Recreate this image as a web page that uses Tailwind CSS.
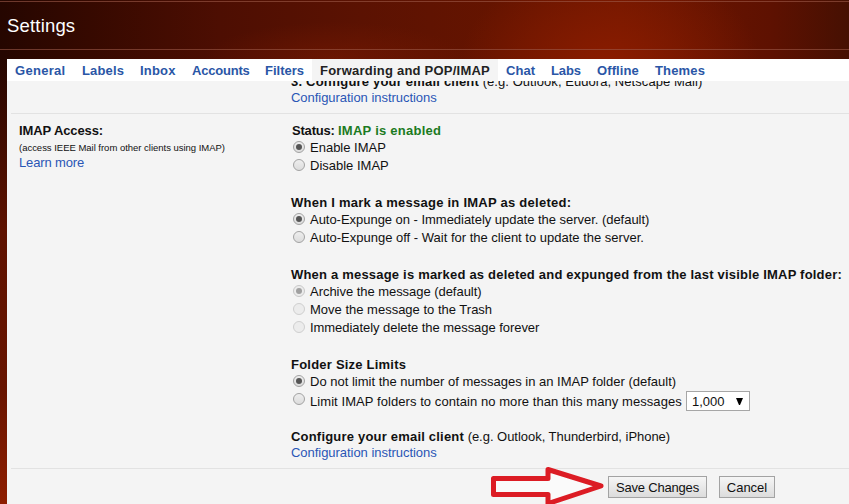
<!DOCTYPE html>
<html lang="en">
<head>
<meta charset="utf-8">
<title>Settings</title>
<script src="https://cdn.jsdelivr.net/npm/@tailwindcss/browser@4"></script>
</head>
<body class="w-[849px] h-[504px] overflow-hidden font-['Liberation_Sans',Arial,sans-serif] text-[13px] leading-4 text-[#111] bg-[#641302]">
<div class="w-full h-full flex flex-col bg-[radial-gradient(ellipse_130px_36px_at_335px_58px,#841d0166,transparent),radial-gradient(ellipse_150px_100px_at_610px_64px,#8a1c00,#8a1c0000),linear-gradient(to_bottom,transparent_60px,#5e1200_230px,#681400_390px,#8e1d00_504px),linear-gradient(to_right,#250600,#360900_90px,#4d0e02_220px,#5b1202_360px,#651400_500px,#701700_620px,#5e1101_770px,#461002)]">
  <header class="mt-px h-[49px] shrink-0 border-y border-[#9c5a4a99] flex items-center pl-[7px]">
    <h1 class="text-[18.5px] leading-6 text-white tracking-[0.18px]">Settings</h1>
  </header>
  <main class="mt-[9px] ml-[7px] flex-1 flex flex-col bg-[#f4f4f4]">
    <nav class="h-[22px] shrink-0 flex bg-white font-bold text-[#2a56a6] leading-[23px] whitespace-nowrap relative">
      <a class="w-[67px] pl-2 tracking-[0.3px]">General</a>
      <a class="w-[58px] pl-2 tracking-[0.15px]">Labels</a>
      <a class="w-[52px] pl-2 tracking-[0.2px]">Inbox</a>
      <a class="w-[73px] pl-2 -tracking-[0.2px]">Accounts</a>
      <a class="w-[55px] pl-2">Filters</a>
      <a class="w-[186px] pl-2 bg-[#f4f4f4] text-[#222] tracking-[0.23px]">Forwarding and POP/IMAP</a>
      <a class="w-[45px] pl-2 tracking-[0.1px]">Chat</a>
      <a class="w-[46px] pl-2 -tracking-[0.1px]">Labs</a>
      <a class="w-[58px] pl-2 tracking-[0.1px]">Offline</a>
      <a class="pl-2 tracking-[0.15px]">Themes</a>
    </nav>
    <section class="h-8 shrink-0 ml-1 pl-[280px] overflow-hidden whitespace-nowrap">
      <p class="-mt-[7px]"><b class="tracking-[0.2px]">3. Configure your email client</b> <span class="tracking-[0.06px]">(e.g. Outlook, Eudora, Netscape Mail)</span></p>
      <a class="block text-[#2a56b6] -tracking-[0.04px]">Configuration instructions</a>
    </section>
    <section class="ml-1 pt-[9px] h-[356px] shrink-0 border-y border-[#e2e2e2] flex whitespace-nowrap">
      <div class="w-[280px] shrink-0 pl-2">
        <b class="block -tracking-[0.1px]">IMAP Access:</b>
        <p class="text-[9.5px] h-4 leading-[18px] -tracking-[0.02px]">(access IEEE Mail from other clients using IMAP)</p>
        <a class="block text-[#2a56b6] -tracking-[0.15px]">Learn more</a>
      </div>
      <div>
        <div class="mb-5">
          <p class="font-bold flex"><span class="ml-px w-[46px] -tracking-[0.2px]">Status:</span><span class="text-[#1b7a22] tracking-[0.25px]">IMAP is enabled</span></p>
          <label class="h-[18px] flex items-center"><i class="ml-[2px] mr-[5px] mb-0.5 size-3 rounded-full border border-[#a2a2a2] bg-linear-to-b from-[#eee] to-[#dcdcdc] flex items-center justify-center"><i class="size-1.5 rounded-full bg-[#555]"></i></i><span>Enable IMAP</span></label>
          <label class="h-[18px] flex items-center"><i class="ml-[2px] mr-[5px] mb-0.5 size-3 rounded-full border border-[#a2a2a2] bg-linear-to-b from-[#eee] to-[#dcdcdc]"></i><span>Disable IMAP</span></label>
        </div>
        <div class="mb-5">
          <p class="font-bold tracking-[0.25px]"><span>When I mark a message in IMAP as deleted:</span></p>
          <label class="h-[18px] flex items-center"><i class="ml-[2px] mr-[5px] mb-0.5 size-3 rounded-full border border-[#a2a2a2] bg-linear-to-b from-[#eee] to-[#dcdcdc] flex items-center justify-center"><i class="size-1.5 rounded-full bg-[#555]"></i></i><span class="-tracking-[0.03px]">Auto-Expunge on - Immediately update the server. (default)</span></label>
          <label class="h-[18px] flex items-center"><i class="ml-[2px] mr-[5px] mb-0.5 size-3 rounded-full border border-[#a2a2a2] bg-linear-to-b from-[#eee] to-[#dcdcdc]"></i><span>Auto-Expunge off - Wait for the client to update the server.</span></label>
        </div>
        <div class="mb-5">
          <p class="font-bold tracking-[0.2px]"><span>When a message is marked as deleted and expunged from the last visible IMAP folder:</span></p>
          <label class="h-[18px] flex items-center"><i class="ml-[2px] mr-[5px] mb-0.5 size-3 rounded-full border border-[#c8c8c8] bg-[#ececec] flex items-center justify-center"><i class="size-1.5 rounded-full bg-[#a0a0a0]"></i></i><span class="-tracking-[0.04px]">Archive the message (default)</span></label>
          <label class="h-[18px] flex items-center"><i class="ml-[2px] mr-[5px] mb-0.5 size-3 rounded-full border border-[#cfcfcf] bg-[#ececec]"></i><span>Move the message to the Trash</span></label>
          <label class="h-[18px] flex items-center"><i class="ml-[2px] mr-[5px] mb-0.5 size-3 rounded-full border border-[#cfcfcf] bg-[#ececec]"></i><span class="-tracking-[0.05px]">Immediately delete the message forever</span></label>
        </div>
        <div class="mb-4">
          <p class="font-bold tracking-[0.22px]"><span>Folder Size Limits</span></p>
          <label class="h-[18px] flex items-center"><i class="ml-[2px] mr-[5px] mb-0.5 size-3 rounded-full border border-[#a2a2a2] bg-linear-to-b from-[#eee] to-[#dcdcdc] flex items-center justify-center"><i class="size-1.5 rounded-full bg-[#555]"></i></i><span>Do not limit the number of messages in an IMAP folder (default)</span></label>
          <div class="h-[22px] flex items-center"><i class="ml-[2px] mr-[5px] mb-1.5 size-3 rounded-full border border-[#a2a2a2] bg-linear-to-b from-[#eee] to-[#dcdcdc]"></i><span class="w-[376px] tracking-[0.07px]">Limit IMAP folders to contain no more than this many messages</span>
            <span class="w-16 h-5 mb-0.5 border border-[#a6a6a6] bg-white flex items-center justify-between pl-[5px] pr-1.5"><span class="pt-px">1,000</span><svg class="w-[7px] h-[7px]" viewBox="0 0 7 7"><path d="M0 0h7L4 7H3z"/></svg></span>
          </div>
        </div>
        <p><b class="tracking-[0.2px]">Configure your email client</b> <span class="-tracking-[0.03px]">(e.g. Outlook, Thunderbird, iPhone)</span></p>
        <a class="block text-[#2a56b6] -tracking-[0.04px]">Configuration instructions</a>
      </div>
    </section>
    <footer class="flex-1 pl-[484px] flex items-start relative">
      <svg class="w-[117px] h-[40px] -mt-[3px] shrink-0 relative" viewBox="0 0 117 40"><path d="M2.5 12.5H57V3.5L110 20L57 37.5V28.5H2.5Z" fill="#fafafa" stroke="#dc1c24" stroke-width="5" stroke-linejoin="round"/></svg>
      <button class="mt-[7px] w-[99px] h-[22px] border border-[#a3a3a3] bg-linear-to-b from-[#f6f6f6] to-[#dcdcdc] leading-[21px] whitespace-nowrap"><span class="-tracking-[0.2px]">Save Changes</span></button>
      <button class="mt-[7px] ml-3 w-14 h-[22px] border border-[#a3a3a3] bg-linear-to-b from-[#f6f6f6] to-[#dcdcdc] leading-[21px]"><span>Cancel</span></button>
    </footer>
  </main>
</div>
</body>
</html>
